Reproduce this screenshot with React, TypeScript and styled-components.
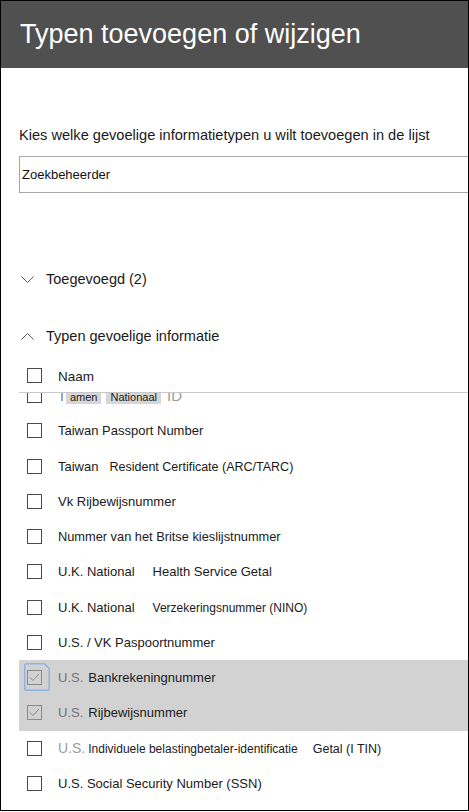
import React from "react";
import styled, { createGlobalStyle } from "styled-components";

const GlobalStyle = createGlobalStyle`
  html, body { margin: 0; padding: 0; background: #ffffff; }
  body { font-family: "Liberation Sans", Arial, sans-serif; color: #1f1f1f; }
  * { box-sizing: border-box; }
`;

const Frame = styled.div`
  width: 469px;
  height: 811px;
  border: 1px solid #000;
  overflow: hidden;
  background: #fff;
  display: flex;
  flex-direction: column;
`;

const Header = styled.header`
  height: 67px;
  flex: 0 0 67px;
  background: #505050;
  display: flex;
  align-items: center;
  padding-left: 19px;
`;

const Title = styled.h1`
  margin: 0;
  font-weight: 400;
  font-size: 27px;
  color: #ffffff;
  letter-spacing: 0;
`;

const Content = styled.main`
  padding-left: 18px;
  display: flex;
  flex-direction: column;
`;

const Intro = styled.p`
  margin: 57px 0 0 0;
  font-size: 14.6px;
  line-height: 20px;
  color: #1a1a1a;
  white-space: nowrap;
`;

const SearchBox = styled.div`
  margin-top: 11px;
  width: 480px;
  height: 37px;
  border: 1px solid #a6a6a6;
  padding-left: 2px;
  display: flex;
  align-items: center;
  font-size: 13px;
  color: #111;
`;

const SectionToggle = styled.div<{ $gap: number }>`
  margin-top: ${(p) => p.$gap}px;
  height: 20px;
  display: flex;
  align-items: center;
  padding-left: 2px;
  gap: 12px;
`;

const SectionLabel = styled.span`
  font-size: 14.5px;
  color: #1a1a1a;
  white-space: nowrap;
`;

const TableHeader = styled.div`
  margin-top: 12px;
  height: 35px;
  width: 480px;
  border-bottom: 1px solid #c8c8c8;
  display: flex;
  align-items: center;
  padding-left: 8px;
  gap: 16px;
`;

const ColumnLabel = styled.span`
  font-size: 13.5px;
  color: #1a1a1a;
  margin-top: 2px;
`;

const ListViewport = styled.div`
  overflow: hidden;
  display: flex;
  flex-direction: column;
`;

const Row = styled.div<{ $selected?: boolean; $clipped?: boolean }>`
  position: relative;
  height: 35.25px;
  flex: 0 0 35.25px;
  width: 480px;
  margin-top: ${(p) => (p.$clipped ? "-15px" : "0")};
  background: ${(p) => (p.$selected ? "#d2d2d2" : "transparent")};
  display: flex;
  align-items: center;
  padding-left: 8px;
  gap: 16px;
`;

const BoxWrap = styled.span`
  position: relative;
  display: inline-flex;
  width: 15px;
  height: 15px;
  flex: 0 0 15px;
`;

const CheckBox = styled.span<{ $checked?: boolean }>`
  width: 15px;
  height: 15px;
  border: 1px solid ${(p) => (p.$checked ? "#8a8a8a" : "#4a4a4a")};
  display: inline-flex;
  align-items: center;
  justify-content: center;
`;

const FocusRing = styled.svg`
  position: absolute;
  left: -3px;
  top: -7px;
  width: 26px;
  height: 28px;
  overflow: visible;
  pointer-events: none;
`;

const RowLabel = styled.span`
  display: flex;
  align-items: baseline;
  white-space: nowrap;
`;

type Tone = "normal" | "muted" | "faint";

const Part = styled.span<{ $tone?: Tone; $size?: number; $gap?: number; $mark?: boolean }>`
  font-size: ${(p) => p.$size ?? 13}px;
  margin-left: ${(p) => p.$gap ?? 0}px;
  color: ${(p) =>
    p.$tone === "muted" ? "#747474" : p.$tone === "faint" ? "#9c9c9c" : "#1a1a1a"};
  background: ${(p) => (p.$mark ? "#d6d6d6" : "transparent")};
  padding: ${(p) => (p.$mark ? "0 4px 1px" : "0")};
`;

const Chevron = ({ up }: { up?: boolean }) => (
  <svg width="13" height="7" viewBox="0 0 13 7" aria-hidden>
    <polyline
      points={up ? "0.5,6.5 6.5,0.5 12.5,6.5" : "0.5,0.5 6.5,6.5 12.5,0.5"}
      fill="none"
      stroke="#5a5a5a"
      strokeWidth="1"
    />
  </svg>
);

const CheckMark = () => (
  <svg width="11" height="9" viewBox="0 0 11 9" aria-hidden>
    <polyline points="1,4.5 4,7.5 10,1" fill="none" stroke="#8a8a8a" strokeWidth="1" />
  </svg>
);

type PartDef = { text: string; tone?: Tone; size?: number; gap?: number; mark?: boolean };
type RowDef = { parts: PartDef[]; checked?: boolean; focused?: boolean; clipped?: boolean };

const rows: RowDef[] = [
  {
    clipped: true,
    parts: [
      { text: "T", tone: "muted" },
      { text: "amen", mark: true, size: 11 },
      { text: "Nationaal", mark: true, size: 11, gap: 5 },
      { text: "ID", tone: "faint", size: 15, gap: 6 },
    ],
  },
  { parts: [{ text: "Taiwan Passport Number" }] },
  {
    parts: [
      { text: "Taiwan" },
      { text: "Resident Certificate (ARC/TARC)", size: 12.5, gap: 11 },
    ],
  },
  { parts: [{ text: "Vk Rijbewijsnummer" }] },
  { parts: [{ text: "Nummer van het Britse kieslijstnummer", size: 12.8 }] },
  {
    parts: [
      { text: "U.K. National" },
      { text: "Health Service Getal", gap: 18 },
    ],
  },
  {
    parts: [
      { text: "U.K. National" },
      { text: "Verzekeringsnummer (NINO)", size: 12, gap: 18 },
    ],
  },
  { parts: [{ text: "U.S. / VK Paspoortnummer" }] },
  {
    checked: true,
    focused: true,
    parts: [
      { text: "U.S.", tone: "muted" },
      { text: "Bankrekeningnummer", gap: 5 },
    ],
  },
  {
    checked: true,
    parts: [
      { text: "U.S.", tone: "muted" },
      { text: "Rijbewijsnummer", gap: 5 },
    ],
  },
  {
    parts: [
      { text: "U.S.", tone: "faint", size: 14 },
      { text: "Individuele belastingbetaler-identificatie", size: 12, gap: 3 },
      { text: "Getal (I TIN)", size: 12.5, gap: 15 },
    ],
  },
  { parts: [{ text: "U.S. Social Security Number (SSN)" }] },
];

export default function App() {
  return (
    <>
      <GlobalStyle />
      <Frame>
        <Header>
          <Title>Typen toevoegen of wijzigen</Title>
        </Header>
        <Content>
          <Intro>Kies welke gevoelige informatietypen u wilt toevoegen in de lijst</Intro>
          <SearchBox>Zoekbeheerder</SearchBox>
          <SectionToggle $gap={76}>
            <Chevron />
            <SectionLabel>Toegevoegd (2)</SectionLabel>
          </SectionToggle>
          <SectionToggle $gap={37}>
            <Chevron up />
            <SectionLabel>Typen gevoelige informatie</SectionLabel>
          </SectionToggle>
          <TableHeader>
            <CheckBox />
            <ColumnLabel>Naam</ColumnLabel>
          </TableHeader>
          <ListViewport>
            {rows.map((r, i) => (
              <Row key={i} $selected={r.checked} $clipped={r.clipped}>
                <BoxWrap>
                  <CheckBox $checked={r.checked}>{r.checked && <CheckMark />}</CheckBox>
                  {r.focused && (
                    <FocusRing viewBox="0 0 26 28" aria-hidden>
                      <path
                        d="M2.5,0.75 H20.5 L25.25,5.5 V25.5 Q25.25,27.25 23.5,27.25 H2.5 Q0.75,27.25 0.75,25.5 V2.5 Q0.75,0.75 2.5,0.75 Z"
                        fill="none"
                        stroke="#8fb2ea"
                        strokeWidth="1.5"
                      />
                    </FocusRing>
                  )}
                </BoxWrap>
                <RowLabel>
                  {r.parts.map((p, j) => (
                    <Part key={j} $tone={p.tone} $size={p.size} $gap={p.gap} $mark={p.mark}>
                      {p.text}
                    </Part>
                  ))}
                </RowLabel>
              </Row>
            ))}
          </ListViewport>
        </Content>
      </Frame>
    </>
  );
}
